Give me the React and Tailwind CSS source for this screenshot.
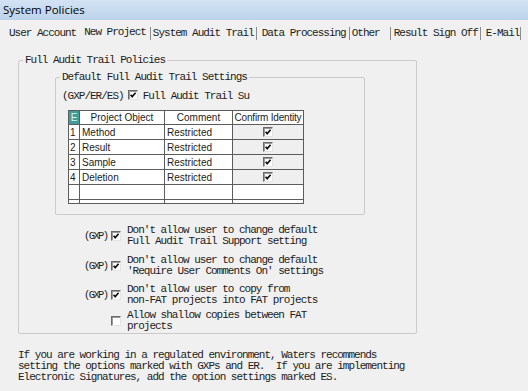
import React from 'react';

const mono = "font-['Liberation_Mono',monospace] text-[11px] tracking-[-1px] leading-[11px] text-[#1c1c1c]";
const sans = "font-['Liberation_Sans',Arial,sans-serif] text-[10px] text-[#1c1c1c]";

const tabs = [
    { label: 'User Account', ml: 'ml-0' },
    { label: 'New Project', ml: 'ml-[8px]', active: true },
    { sep: 'ml-[4px]' },
    { label: 'System Audit Trail', ml: 'ml-[2px]' },
    { sep: 'ml-[2px]' },
    { label: 'Data Processing', ml: 'ml-[5px]' },
    { sep: 'ml-[3px]' },
    { label: 'Other', ml: 'ml-[2px]' },
    { sep: 'ml-[10px]' },
    { label: 'Result Sign Off', ml: 'ml-[3px]' },
    { sep: 'ml-[2px]' },
    { label: 'E-Mail', ml: 'ml-[5px]' },
    { sep: 'ml-[1px]' },
];

const objects = ['Method', 'Result', 'Sample', 'Deletion'];

const options = [
    { gxp: true, checked: true, text: "Don't allow user to change default\nFull Audit Trail Support setting", mt: 'mt-[10px]' },
    { gxp: true, checked: true, text: "Don't allow user to change default\n'Require User Comments On' settings", mt: 'mt-[8px]' },
    { gxp: true, checked: true, text: "Don't allow user to copy from\nnon-FAT projects into FAT projects", mt: 'mt-[7px]' },
    { gxp: false, checked: false, text: 'Allow shallow copies between FAT\nprojects', mt: 'mt-[4px]' },
];

function Check({ checked }) {
    return (
        <span className="inline-flex w-[10px] h-[10px] shrink-0 items-center justify-center bg-white border border-t-[#6a6a6a] border-l-[#6a6a6a] border-b-[#e4e4e4] border-r-[#e4e4e4] shadow-[inset_1px_1px_0_#9a9a9a]">
            {checked && (
                <svg width="8" height="8" viewBox="0 0 8 8">
                    <path d="M1.6 3.8 L3.2 5.6 L6.6 1.8" fill="none" stroke="#111" strokeWidth="1.7" />
                </svg>
            )}
        </span>
    );
}

function Cell({ children, className = '' }) {
    return (
        <div className={`border-r border-b border-[#5c5c5c] flex items-center overflow-hidden whitespace-nowrap ${className}`}>
            {children}
        </div>
    );
}

export default function App() {
    return (
        <div className="w-[528px] h-[391px] bg-[#f0f0f0] overflow-hidden">
            {/* title bar */}
            <div className="h-[20px] bg-gradient-to-b from-[#d3e3f4] to-[#bcd2ea] flex items-center pl-[3px] font-['Open_Sans',sans-serif] text-[11.5px] text-black">
                System Policies
            </div>

            {/* tab strip */}
            <div className={`h-[27px] flex items-center pl-[9px] ${mono}`}>
                {tabs.map((t, i) =>
                    t.sep ? (
                        <span key={i} className={`${t.sep} inline-block w-px h-[13px] bg-[#8c8c8c]`} />
                    ) : (
                        <span key={i} className={`${t.ml} whitespace-pre ${t.active ? 'mb-[2px]' : ''}`}>{t.label}</span>
                    )
                )}
            </div>

            {/* outer group */}
            <fieldset className="mt-[8px] ml-[18px] w-[399px] h-[279px] border border-[#cbcbcb] rounded-[2px]">
                <legend className={`ml-[4px] px-[2px] ${mono}`}>Full Audit Trail Policies</legend>

                <fieldset className="mt-[6px] ml-[36px] w-[310px] h-[143px] border border-[#cbcbcb] rounded-[2px]">
                    <legend className={`ml-[4px] px-[2px] ${mono}`}>Default Full Audit Trail Settings</legend>

                    <div className={`mt-[7px] pl-[6px] flex items-center ${mono}`}>
                        <span>(GXP/ER/ES)</span>
                        <span className="ml-[4px]"><Check checked /></span>
                        <span className="ml-[5px]">Full Audit Trail Su</span>
                    </div>

                    <div className={`mt-[8px] ml-[12px] w-[236px] border-l border-t border-[#5c5c5c] grid grid-cols-[11px_85px_68px_71px] ${sans}`}>
                        <Cell className="h-[14px] bg-[#3f9e98] text-[#d9f2ef] justify-center">E</Cell>
                        <Cell className="h-[14px] bg-white justify-center">Project Object</Cell>
                        <Cell className="h-[14px] bg-white justify-center">Comment</Cell>
                        <Cell className="h-[14px] bg-white justify-center tracking-[-0.2px]">Confirm Identity</Cell>
                        {objects.map((o, i) => (
                            <React.Fragment key={o}>
                                <Cell className="h-[15px] bg-white pl-[1px]">{i + 1}</Cell>
                                <Cell className="h-[15px] bg-white pl-[2px]">{o}</Cell>
                                <Cell className="h-[15px] bg-white pl-[2px]">Restricted</Cell>
                                <Cell className="h-[15px] bg-[#efefef] justify-center"><Check checked /></Cell>
                            </React.Fragment>
                        ))}
                        {[0, 1, 2, 3].map((k) => <Cell key={'e' + k} className="h-[15px] bg-white" />)}
                        {[0, 1, 2, 3].map((k) => <Cell key={'f' + k} className="h-[4px] bg-white" />)}
                    </div>
                </fieldset>

                {options.map((o, i) => (
                    <div key={i} className={`${o.mt} h-[22px] flex items-center pl-[65px] ${mono}`}>
                        <span className="w-[27px] text-[10.5px] tracking-[-1.6px]">{o.gxp ? '(GXP)' : ''}</span>
                        <Check checked={o.checked} />
                        <span className="ml-[6px] whitespace-pre">{o.text}</span>
                    </div>
                ))}
            </fieldset>

            {/* footer note */}
            <p className={`mt-[16px] pl-[18px] whitespace-pre ${mono}`}>
                {'If you are working in a regulated environment, Waters recommends\nsetting the options marked with GXPs and ER.  If you are implementing\nElectronic Signatures, add the option settings marked ES.'}
            </p>
        </div>
    );
}
